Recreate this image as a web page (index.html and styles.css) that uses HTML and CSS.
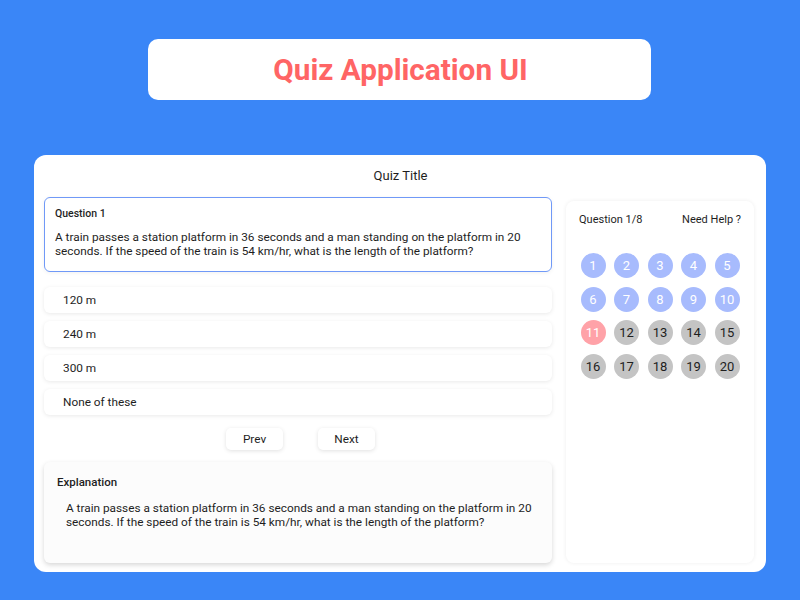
FILE: index.html
```html
<!DOCTYPE html>
<html lang="en">
<head>
<meta charset="utf-8">
<title>Quiz Application UI</title>
<link rel="stylesheet" href="styles.css">
</head>
<body>
<div class="page">
  <header class="banner"><h1>Quiz Application UI</h1></header>
  <main class="quiz">
    <div class="quiz-title">Quiz Title</div>
    <div class="quiz-body">
      <section class="left">
        <div class="question">
          <div class="q-label">Question 1</div>
          <p class="q-text">A train passes a station platform in 36 seconds and a man standing on the platform in 20 seconds. If the speed of the train is 54 km/hr, what is the length of the platform?</p>
        </div>
        <ul class="options">
          <li class="option">120 m</li>
          <li class="option">240 m</li>
          <li class="option">300 m</li>
          <li class="option">None of these</li>
        </ul>
        <div class="nav">
          <button class="btn">Prev</button>
          <button class="btn">Next</button>
        </div>
        <div class="explanation">
          <div class="e-label">Explanation</div>
          <p class="e-text">A train passes a station platform in 36 seconds and a man standing on the platform in 20 seconds. If the speed of the train is 54 km/hr, what is the length of the platform?</p>
        </div>
      </section>
      <aside class="panel">
        <div class="panel-head"><span>Question 1/8</span><span>Need Help ?</span></div>
        <div class="grid">
          <span class="dot done">1</span><span class="dot done">2</span><span class="dot done">3</span><span class="dot done">4</span><span class="dot done">5</span>
          <span class="dot done">6</span><span class="dot done">7</span><span class="dot done">8</span><span class="dot done">9</span><span class="dot done">10</span>
          <span class="dot wrong">11</span><span class="dot">12</span><span class="dot">13</span><span class="dot">14</span><span class="dot">15</span>
          <span class="dot">16</span><span class="dot">17</span><span class="dot">18</span><span class="dot">19</span><span class="dot">20</span>
        </div>
      </aside>
    </div>
  </main>
</div>
</body>
</html>
```
FILE: styles.css
```css
* { box-sizing: border-box; }
html, body { margin: 0; padding: 0; }
body {
  background: #3a86f7;
  font-family: Roboto, "Liberation Sans", sans-serif;
  color: #1e1e1e;
  width: 800px;
  height: 600px;
  overflow: hidden;
}
.page {
  display: flex;
  flex-direction: column;
  align-items: flex-start;
}
.banner {
  margin: 39px 0 0 148px;
  width: 503px;
  height: 61px;
  background: #fff;
  border-radius: 10px;
  display: flex;
  align-items: center;
  justify-content: center;
}
.banner h1 {
  margin: 0 0 0 2px;
  font-size: 29.7px;
  font-weight: 700;
  color: #ff6565;
}
.quiz {
  margin: 55px 0 0 34px;
  width: 732px;
  height: 417px;
  background: #fff;
  border-radius: 12px;
  padding: 0 12px 9px 10px;
  display: flex;
  flex-direction: column;
}
.quiz-title {
  height: 42px;
  display: flex;
  align-items: center;
  justify-content: center;
  font-size: 13px;
  padding-bottom: 2px;
  padding-left: 3px;
}
.quiz-body {
  display: flex;
  gap: 14px;
  flex: 1;
}
.left {
  width: 508px;
  display: flex;
  flex-direction: column;
}
.question {
  height: 75px;
  border: 1px solid #7099f7;
  border-radius: 6px;
  padding: 10px 10px 0 10px;
  box-shadow: 0 1px 4px rgba(0,0,0,0.06);
}
.q-label {
  font-size: 10.5px;
  font-weight: 500;
  line-height: 12px;
}
.q-text {
  margin: 10px 0 0;
  font-size: 11.8px;
  line-height: 14px;
}
.options {
  list-style: none;
  margin: 15px 0 0;
  padding: 0;
  display: flex;
  flex-direction: column;
  gap: 8px;
}
.option {
  height: 26px;
  background: #fff;
  border-radius: 6px;
  box-shadow: 0 1px 4px rgba(0,0,0,0.09);
  display: flex;
  align-items: center;
  padding-left: 19px;
  font-size: 11.8px;
}
.nav {
  margin-top: 13px;
  display: flex;
  justify-content: center;
  gap: 35px;
  padding-left: 5px;
}
.btn {
  width: 57px;
  height: 22px;
  border: 0;
  background: #fff;
  border-radius: 5px;
  box-shadow: 0 1px 4px rgba(0,0,0,0.12);
  font-family: inherit;
  font-size: 11.8px;
  color: #1e1e1e;
  padding: 0;
}
.explanation {
  margin-top: 12px;
  height: 101px;
  background: #fcfcfc;
  border-radius: 6px;
  box-shadow: 0 2px 5px rgba(0,0,0,0.16);
  padding: 13px 8px 0 13px;
}
.e-label {
  font-size: 11.5px;
  font-weight: 500;
  line-height: 14px;
}
.e-text {
  margin: 12px 0 0 9px;
  font-size: 11.8px;
  line-height: 14px;
}
.panel {
  margin-top: 4px;
  width: 188px;
  background: #fff;
  border-radius: 8px;
  box-shadow: 0 0 4px rgba(0,0,0,0.07);
  padding: 12px 13px 0 13px;
}
.panel-head {
  display: flex;
  justify-content: space-between;
  font-size: 11px;
  line-height: 14px;
}
.grid {
  margin-top: 26px;
  display: grid;
  grid-template-columns: repeat(5, 25px);
  gap: 8.5px;
  justify-content: center;
}
.dot {
  width: 25px;
  height: 25px;
  border-radius: 50%;
  background: #c4c4c4;
  color: #1e1e1e;
  display: flex;
  align-items: center;
  justify-content: center;
  font-size: 13px;
}
.dot.done { background: #a7bbfd; color: #fff; }
.dot.wrong { background: #ffa2a8; color: #fff; }
```
